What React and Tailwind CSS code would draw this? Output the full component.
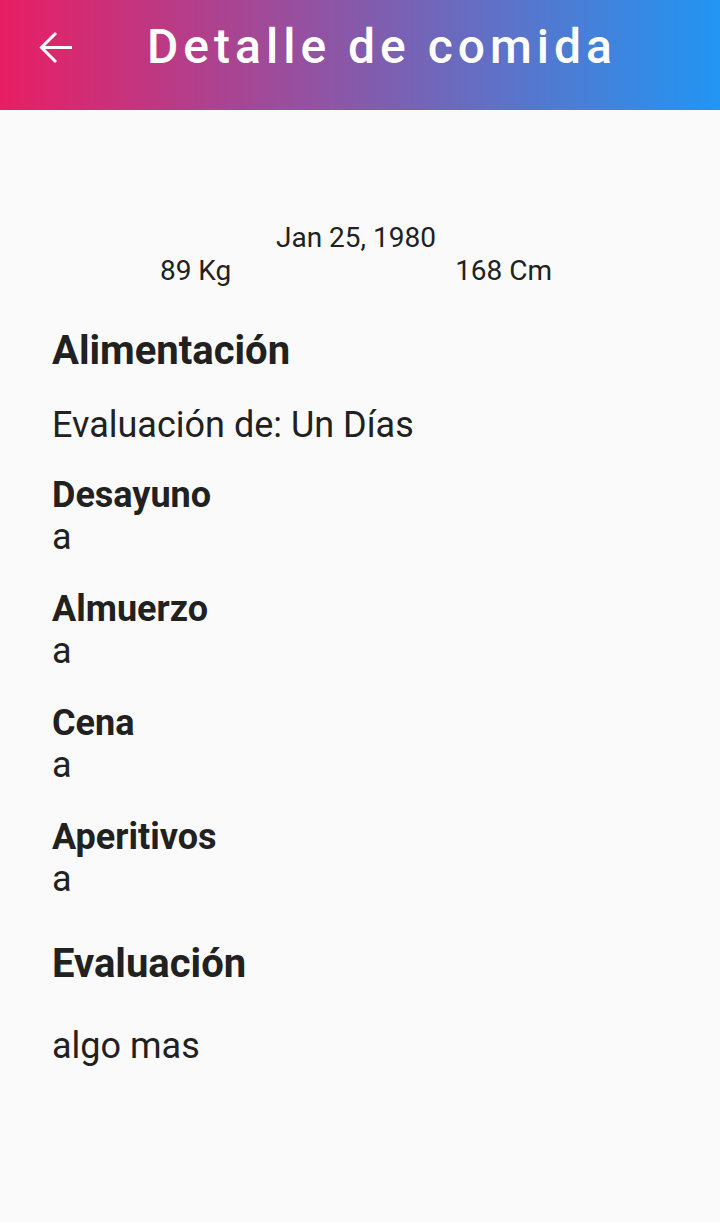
import React from "react";

const meals = ["Desayuno", "Almuerzo", "Cena", "Aperitivos"];

export default function App() {
  return (
    <div className="w-[720px] h-[1222px] bg-[#fafafa] text-[#212121] overflow-hidden" style={{ fontFamily: "Roboto, 'Noto Sans', sans-serif" }}>
      <header className="h-[110px] flex items-center pb-[17px] bg-[linear-gradient(to_right,#e91e63,#2196f3)]">
        <svg className="ml-[38px] shrink-0 mt-[2px]" width="35" height="35" viewBox="0 0 35 35" fill="none" stroke="white" strokeWidth="3">
          <path d="M34 17.5H3.5" />
          <path d="M18 3L3.5 17.5L18 32" />
        </svg>
        <h1 className="ml-[74px] text-white text-[48px] font-medium tracking-[5px] leading-[48px] whitespace-nowrap">Detalle de comida</h1>
      </header>
      <main className="px-[52px]">
        <div className="pt-[111px] text-[28px] leading-[33px] -ml-[4px] mr-[4px]">
          <div className="text-center">Jan 25, 1980</div>
          <div className="flex justify-around">
            <span>89 Kg</span>
            <span>168 Cm</span>
          </div>
        </div>
        <h2 className="mt-[40px] text-[40px] leading-[47px] font-bold">Alimentación</h2>
        <p className="mt-[30px] text-[36px] leading-[42px]">Evaluación de: Un Días</p>
        <div className="mt-[28px] flex flex-col gap-[30px]">
          {meals.map((m) => (
            <div key={m}>
              <div className="text-[36px] leading-[42px] font-bold">{m}</div>
              <div className="text-[36px] leading-[42px]">a</div>
            </div>
          ))}
        </div>
        <h2 className="mt-[40px] text-[40px] leading-[47px] font-bold">Evaluación</h2>
        <p className="mt-[38px] text-[36px] leading-[42px]">algo mas</p>
      </main>
    </div>
  );
}
